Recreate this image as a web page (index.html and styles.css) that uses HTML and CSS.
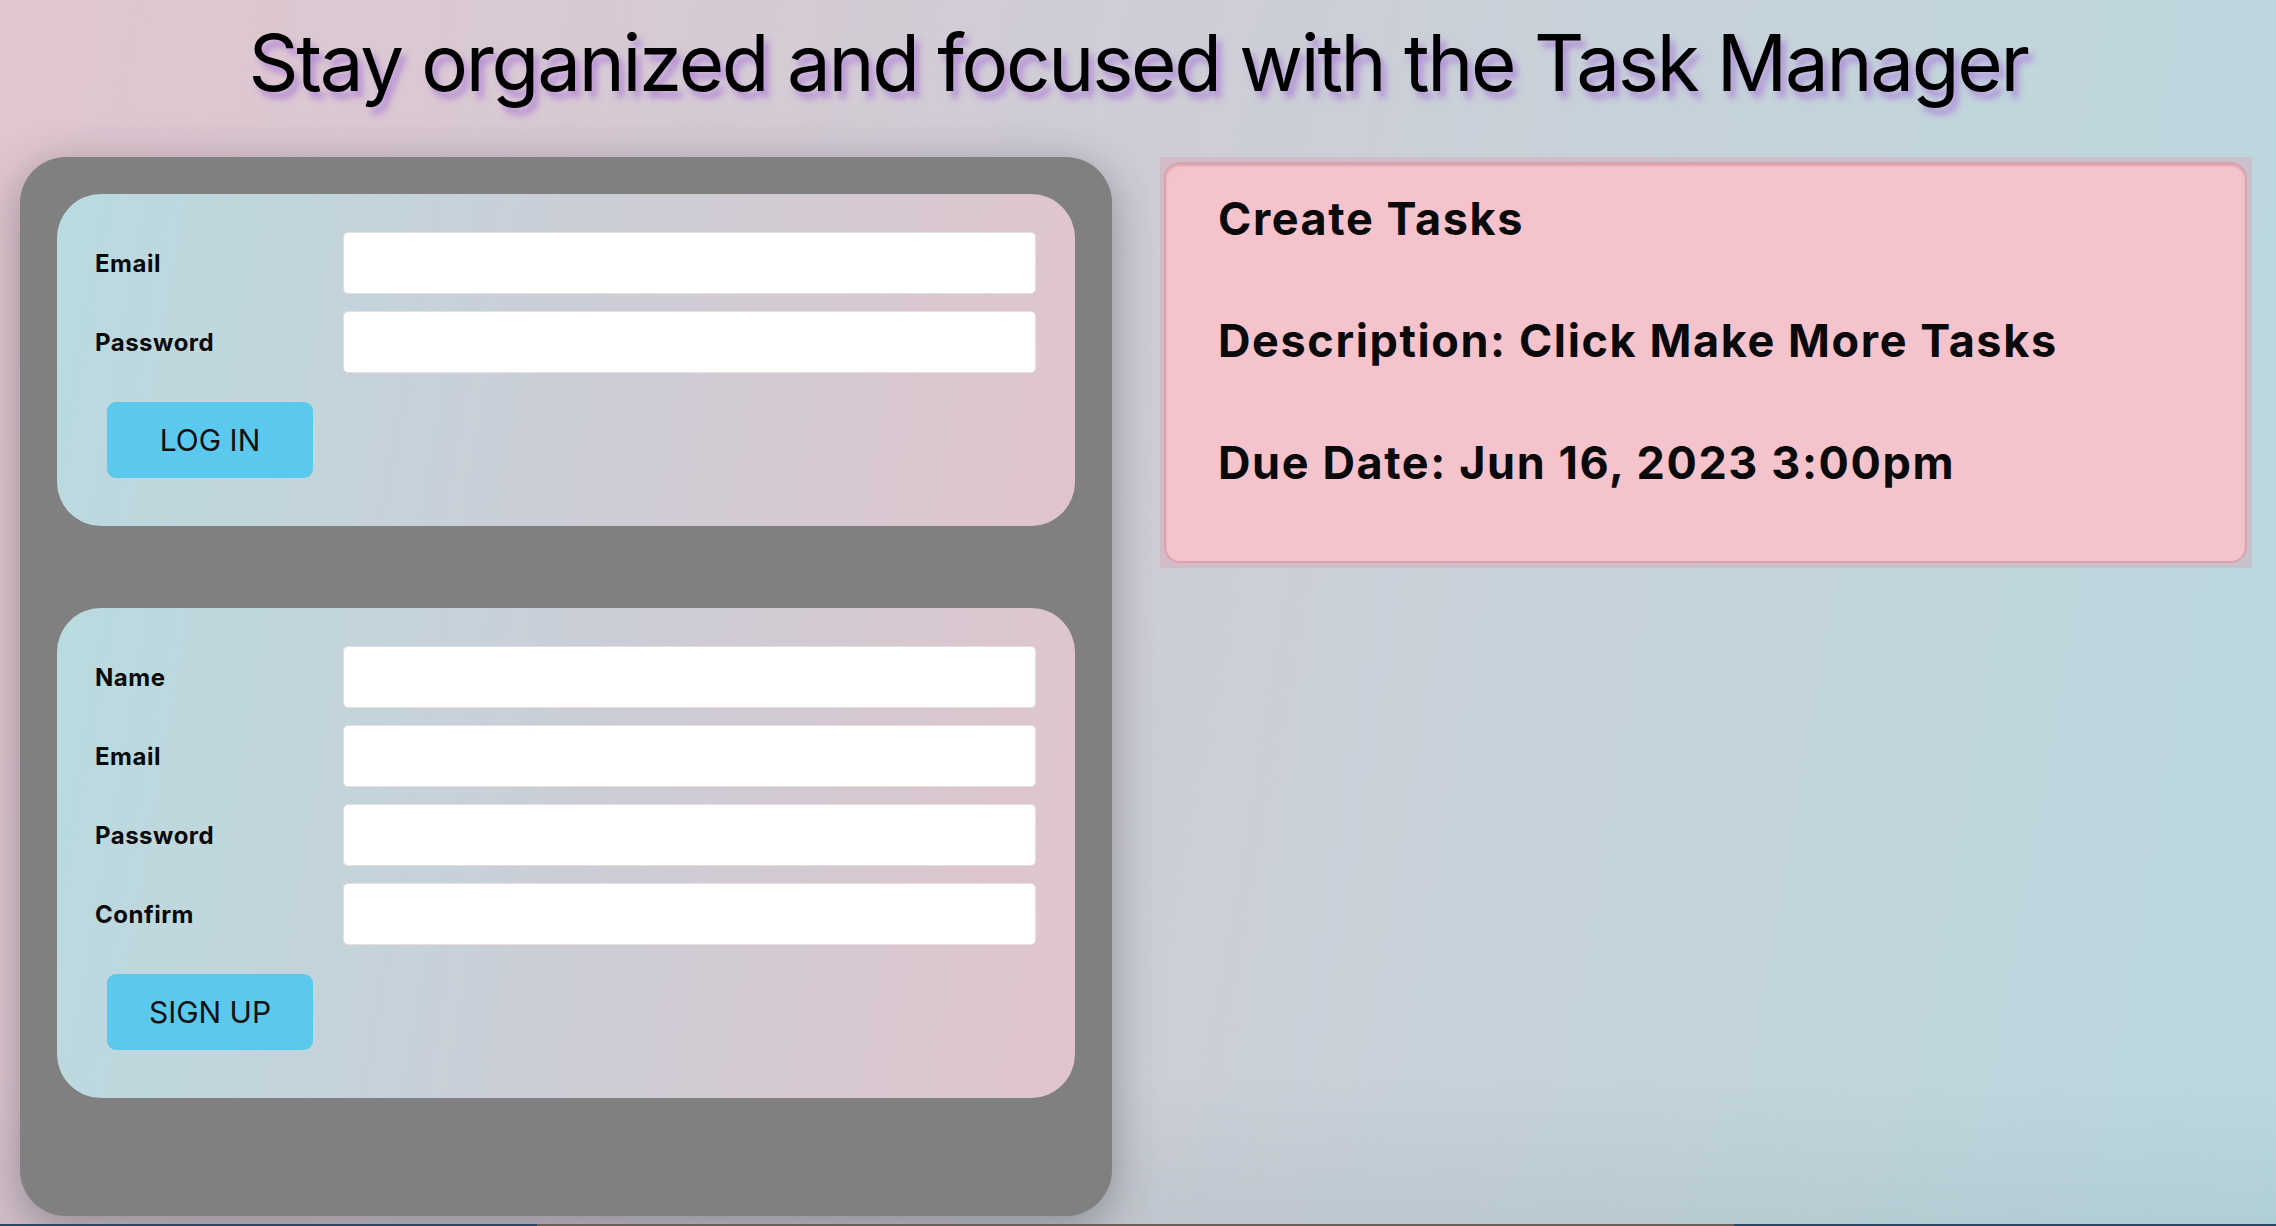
FILE: index.html
```html
<!DOCTYPE html>
<html lang="en">
<head>
<meta charset="utf-8">
<title>Task Manager</title>
<link rel="stylesheet" href="styles.css">
</head>
<body>
<div class="page">
  <h1 class="title">Stay organized and focused with the Task Manager</h1>
  <main class="layout">
    <section class="auth-panel">
      <form class="auth-card">
        <div class="fields">
          <label class="field-label" for="login-email">Email</label>
          <input class="field-input" id="login-email" type="email">
          <label class="field-label" for="login-password">Password</label>
          <input class="field-input" id="login-password" type="password">
        </div>
        <button class="auth-btn" type="button">LOG IN</button>
      </form>
      <form class="auth-card">
        <div class="fields">
          <label class="field-label" for="su-name">Name</label>
          <input class="field-input" id="su-name" type="text">
          <label class="field-label" for="su-email">Email</label>
          <input class="field-input" id="su-email" type="email">
          <label class="field-label" for="su-password">Password</label>
          <input class="field-input" id="su-password" type="password">
          <label class="field-label" for="su-confirm">Confirm</label>
          <input class="field-input" id="su-confirm" type="password">
        </div>
        <button class="auth-btn" type="button">SIGN UP</button>
      </form>
    </section>
    <section class="task-column">
      <div class="task-wrap">
        <div class="task-card">
          <div class="task-line">Create Tasks</div>
          <div class="task-line">Description: Click Make More Tasks</div>
          <div class="task-line">Due Date: Jun 16, 2023 3:00pm</div>
        </div>
      </div>
    </section>
  </main>
</div>
<div class="dock-strip"><span class="dock-mid"></span></div>
</body>
</html>
```
FILE: styles.css
```css
html, body {
  margin: 0;
  padding: 0;
  height: 100%;
}

body {
  font-family: "Inter", "Liberation Sans", sans-serif;
  color: #000;
  background: linear-gradient(100deg, #e1c6d0 0%, #cfcdd6 45%, #bad9df 100%);
  overflow: hidden;
  display: flex;
  flex-direction: column;
}

.page {
  flex: 1;
  position: relative;
  background: linear-gradient(to bottom, rgba(0,0,0,0) 88%, rgba(60,90,100,0.08) 100%);
}

.title {
  margin: 16px 0 47px;
  font-size: 78px;
  line-height: 94px;
  font-weight: 400;
  text-align: center;
  letter-spacing: -2.3px;
  text-shadow: 5px 7px 6px rgba(170, 120, 215, 0.7);
}

.layout {
  display: grid;
  grid-template-columns: 1092px 1092px;
  column-gap: 48px;
  padding-left: 20px;
  align-items: start;
}

.auth-panel {
  background: #808080;
  border-radius: 46px;
  padding: 37px 37px 116px;
  height: 1059px;
  box-sizing: border-box;
  display: flex;
  flex-direction: column;
  gap: 82px;
  box-shadow: 0 10px 45px rgba(40, 40, 50, 0.38);
}

.auth-card {
  margin: 0;
  border-radius: 44px;
  background: linear-gradient(100deg, #b9dbe0 0%, #cbced7 50%, #e1c4cd 100%);
  padding: 38px 39px 48px 38px;
}

.fields {
  display: grid;
  grid-template-columns: 248px 1fr;
  row-gap: 17px;
  align-items: center;
}

.field-label {
  font-size: 24px;
  font-weight: 700;
  letter-spacing: 0.5px;
  color: #0a0a0a;
}

.field-input {
  height: 62px;
  box-sizing: border-box;
  border: 1px solid #e8dedb;
  border-radius: 5px;
  background: #fff;
  font: inherit;
  padding: 0 12px;
}

.auth-btn {
  margin: 29px 0 0 12px;
  width: 206px;
  height: 76px;
  border: none;
  border-radius: 9px;
  background: #5bc8ee;
  color: #111;
  font-family: "Inter", "Liberation Sans", sans-serif;
  font-size: 30px;
  font-weight: 400;
  display: block;
}

.task-wrap {
  background: rgba(222, 158, 175, 0.38);
  padding: 5px 5px 5px 4px;
}

.task-card {
  background: #f5c3cc;
  border: 2px solid #d9a3ae;
  border-radius: 16px;
  box-shadow: inset 0 2px 2px rgba(180, 110, 125, 0.35);
  padding: 28px 40px 72px 52px;
  display: flex;
  flex-direction: column;
  gap: 69px;
}

.task-line {
  font-size: 45px;
  line-height: 53px;
  font-weight: 700;
  letter-spacing: 1.6px;
  color: #0a0a0a;
}

.dock-strip {
  height: 2px;
  background: #2c4768;
  position: relative;
}

.dock-mid {
  position: absolute;
  left: 537px;
  width: 1197px;
  top: 0;
  bottom: 0;
  background: #6b5f58;
}
```
